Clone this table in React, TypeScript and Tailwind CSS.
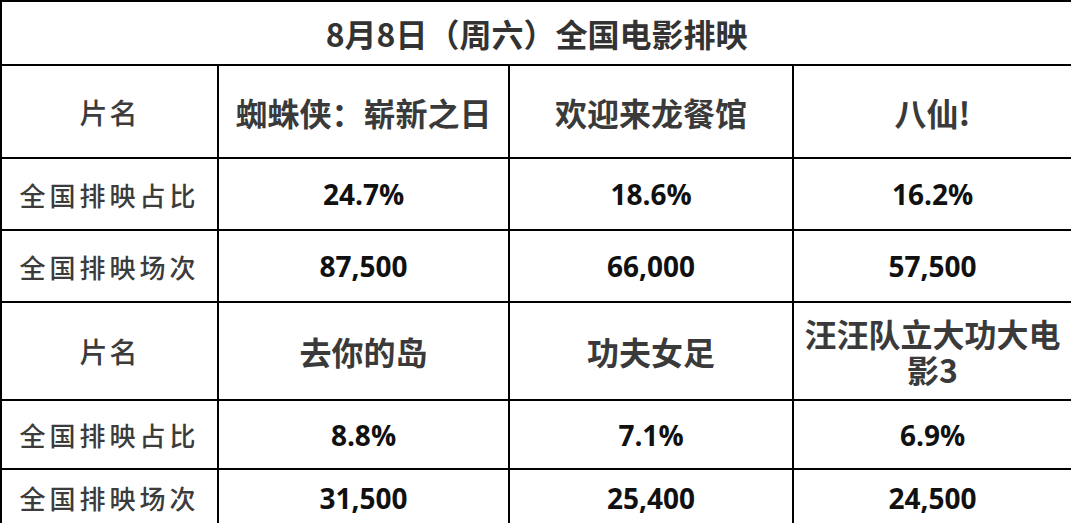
const rows = [
  { label: "片名", kind: "title", cells: ["蜘蛛侠：崭新之日", "欢迎来龙餐馆", "八仙!"], h: "h-[93px]" },
  { label: "全国排映占比", kind: "num", cells: ["24.7%", "18.6%", "16.2%"], h: "h-[72px]" },
  { label: "全国排映场次", kind: "num", cells: ["87,500", "66,000", "57,500"], h: "h-[72px]" },
  { label: "片名", kind: "title", cells: ["去你的岛", "功夫女足", "汪汪队立大功大电影3"], h: "h-[98px]" },
  { label: "全国排映占比", kind: "num", cells: ["8.8%", "7.1%", "6.9%"], h: "h-[69px]" },
  { label: "全国排映场次", kind: "num", cells: ["31,500", "25,400", "24,500"], h: "h-[57px]" },
];

const cjk = "font-['Noto_Sans_CJK_SC',sans-serif]";
const num = "font-['Open_Sans','Noto_Sans_CJK_SC',sans-serif]";

export default function App() {
  return (
    <div className="bg-white w-[1071px] h-[523px] overflow-hidden">
      <table className="w-[1071px] border-collapse table-fixed border-2 border-black">
        <colgroup>
          <col className="w-[217px]" />
          <col className="w-[291px]" />
          <col className="w-[284px]" />
          <col className="w-[279px]" />
        </colgroup>
        <tbody>
          <tr className="h-[64px]">
            <td
              colSpan={4}
              className={`border-2 border-black text-center text-[32px] font-bold text-[#333] ${cjk}`}
            >
              8月8日（周六）全国电影排映
            </td>
          </tr>
          {rows.map((row, i) => (
            <tr key={i} className={row.h}>
              <td className="border-2 border-black text-center p-0">
                {row.kind === "title" ? (
                  <span className={`text-[28px] font-medium tracking-[2px] text-[#3c3c3c] ${cjk}`}>{row.label}</span>
                ) : (
                  <span className={`text-[26px] font-medium tracking-[4px] text-[#3c3c3c] ${cjk}`}>{row.label}</span>
                )}
              </td>
              {row.cells.map((c, j) => (
                <td key={j} className="border-2 border-black text-center px-1 py-0">
                  {row.kind === "title" ? (
                    <div className={`text-[32px] leading-[36px] font-bold text-[#3a3a3a] ${cjk}`}>{c}</div>
                  ) : (
                    <div className={`text-[28px] font-bold text-[#111] ${num}`}>{c}</div>
                  )}
                </td>
              ))}
            </tr>
          ))}
        </tbody>
      </table>
    </div>
  );
}
